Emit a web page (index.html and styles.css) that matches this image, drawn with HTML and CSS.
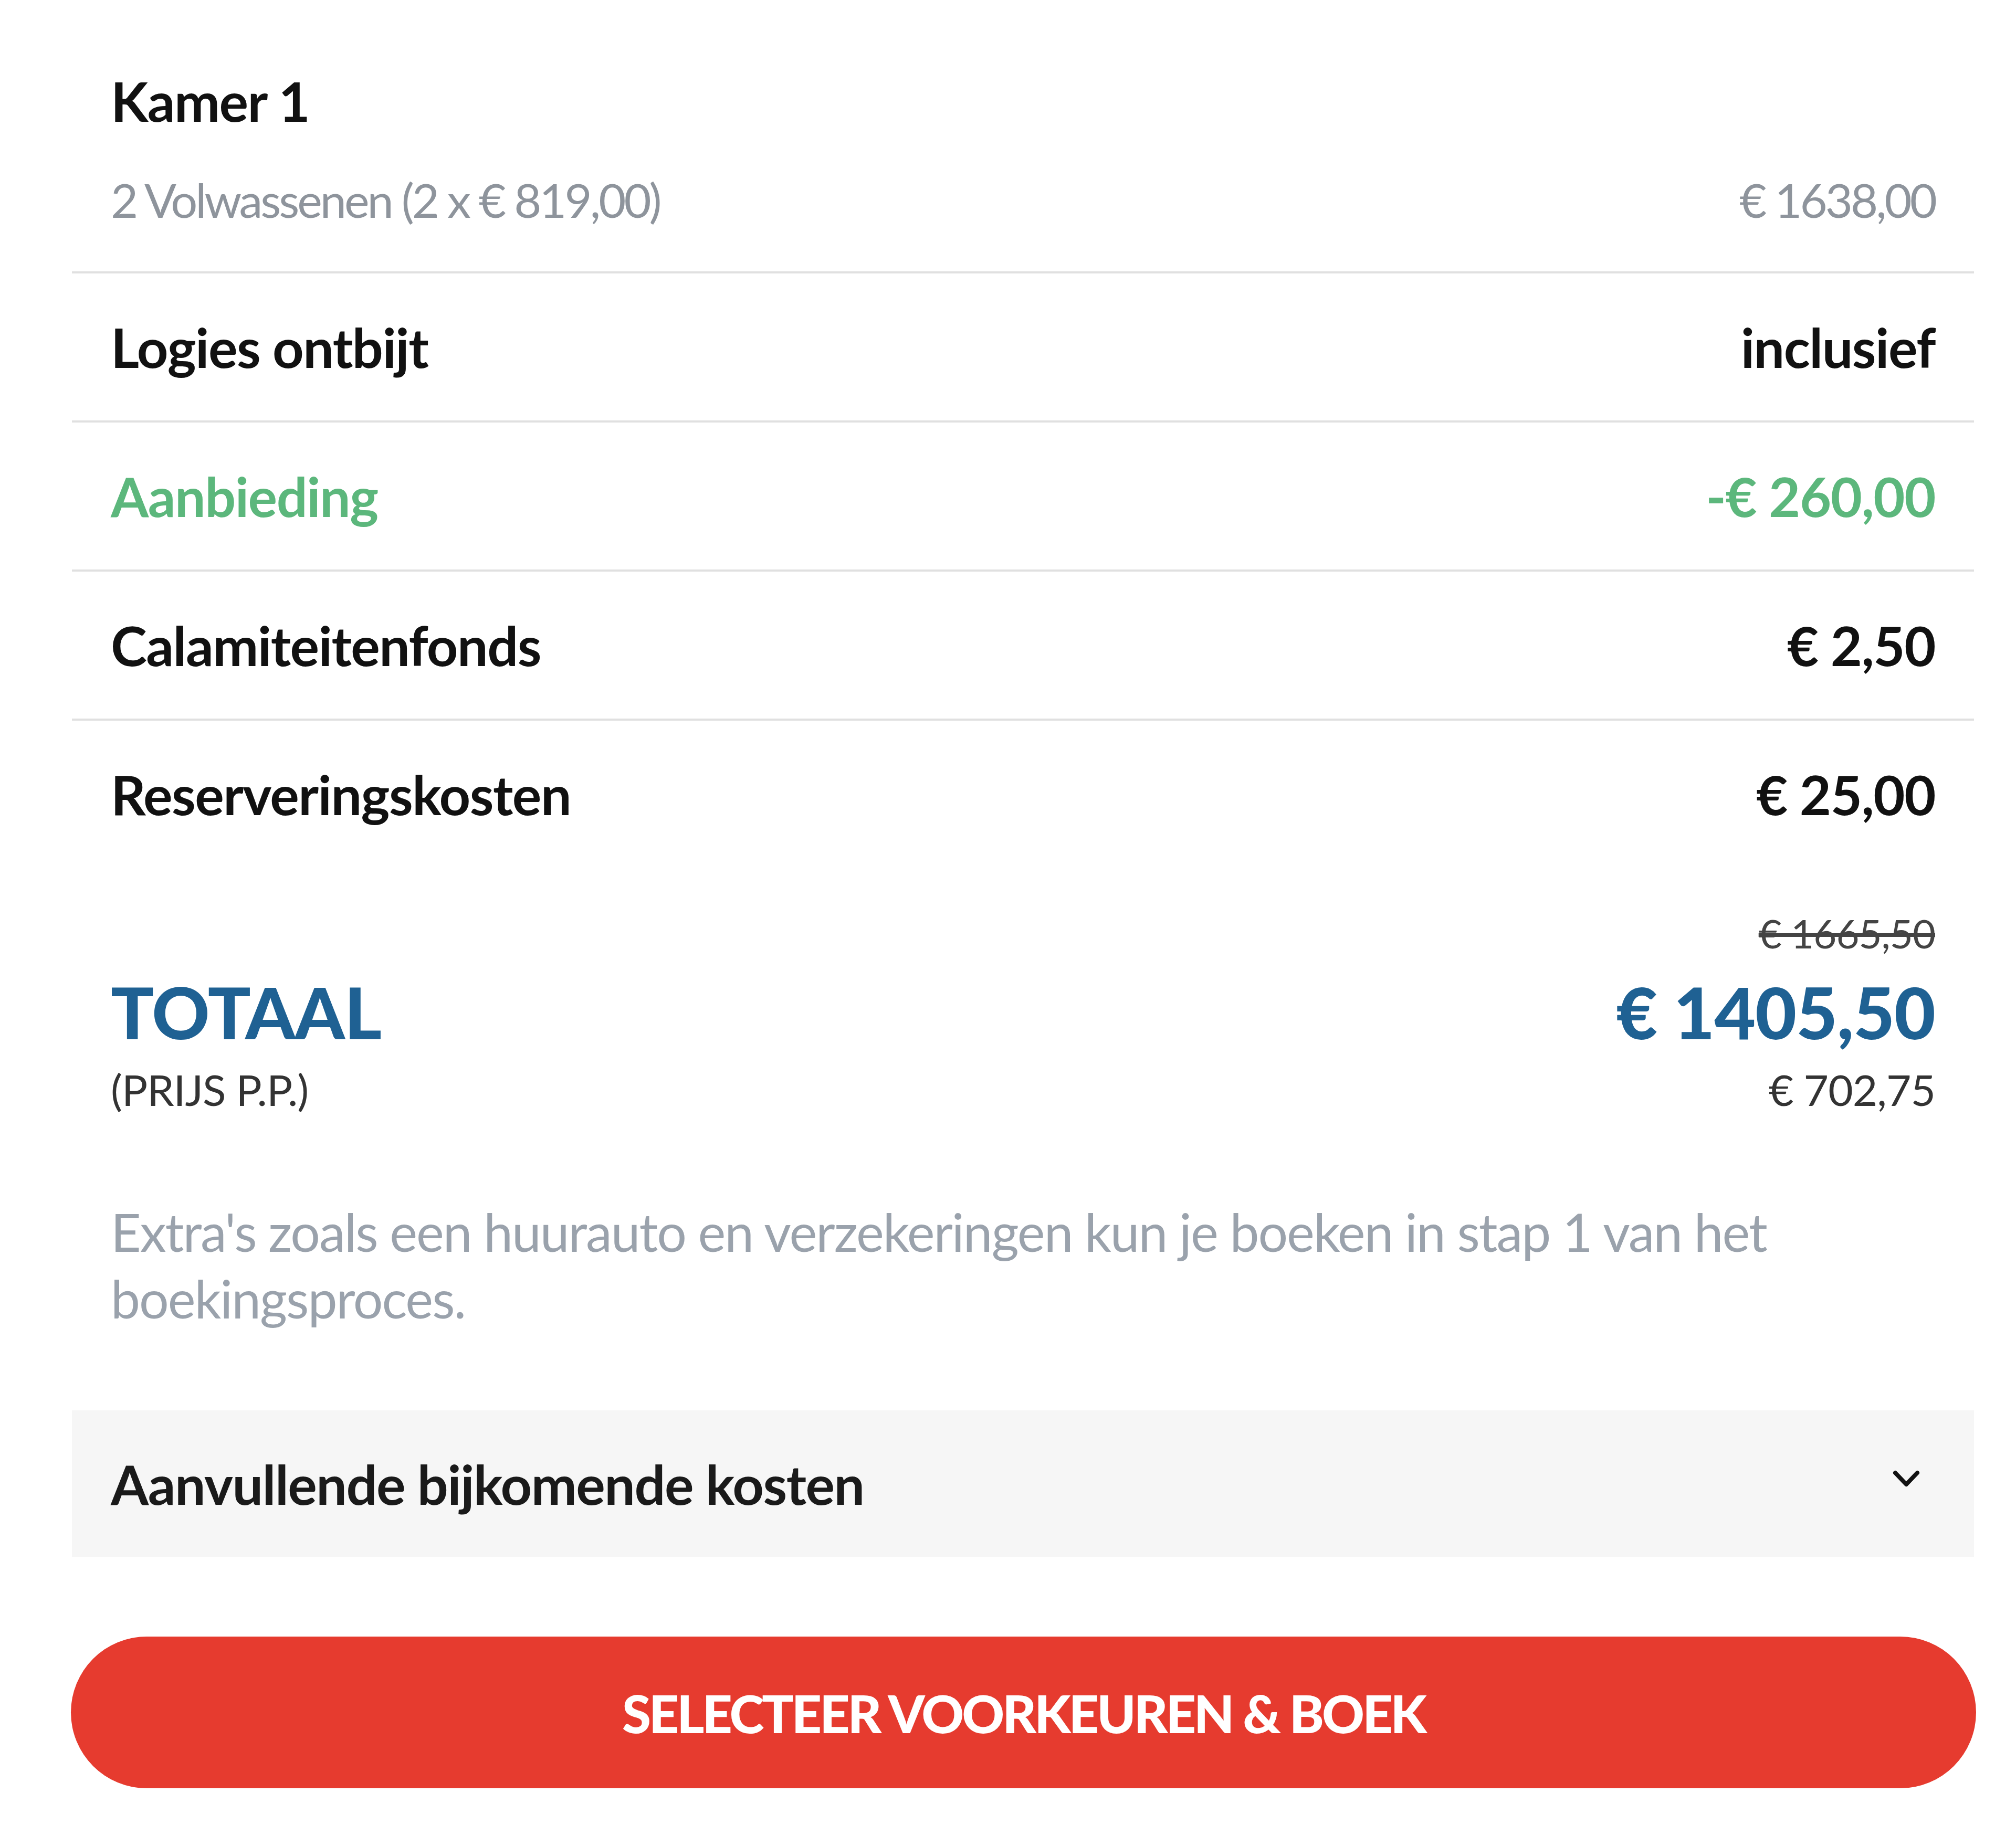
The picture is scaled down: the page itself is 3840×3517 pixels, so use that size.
FILE: index.html
```html
<!DOCTYPE html>
<html lang="nl">
<head>
<meta charset="utf-8">
<title>Prijsoverzicht</title>
<link rel="stylesheet" href="styles.css">
</head>
<body>
<div class="summary">
  <section class="row room">
    <div class="room-title">Kamer 1</div>
    <div class="line sub"><span>2 Volwassenen (2 x € 819,00)</span><span>€ 1638,00</span></div>
  </section>
  <div class="row line strong"><span>Logies ontbijt</span><span>inclusief</span></div>
  <div class="row line strong offer"><span>Aanbieding</span><span>-€ 260,00</span></div>
  <div class="row line strong"><span>Calamiteitenfonds</span><span>€ 2,50</span></div>
  <div class="row line strong last"><span>Reserveringskosten</span><span>€ 25,00</span></div>

  <section class="total">
    <div class="old-price"><s>€ 1665,50</s></div>
    <div class="line total-main"><span>TOTAAL</span><span>€ 1405,50</span></div>
    <div class="line total-pp"><span>(PRIJS P.P.)</span><span>€ 702,75</span></div>
  </section>

  <p class="note">Extra's zoals een huurauto en verzekeringen kun je boeken in stap 1 van het boekingsproces.</p>

  <div class="extra">
    <span>Aanvullende bijkomende kosten</span>
    <svg class="chev" width="52" height="34" viewBox="0 0 52 34"><polyline points="5,6 26,28 47,6" fill="none" stroke="#111" stroke-width="8" stroke-linecap="round" stroke-linejoin="round"/></svg>
  </div>

  <button class="book">SELECTEER VOORKEUREN &amp; BOEK</button>
</div>
</body>
</html>
```

FILE: styles.css
```css
html, body {
  margin: 0;
  padding: 0;
  background: #ffffff;
}
body {
  font-family: Lato, "Open Sans", "Liberation Sans", sans-serif;
  color: #111;
  height: 3517px;
}
.summary {
  margin-left: 137px;
  width: 3623px;
}
.row {
  padding: 80px 74px;
  border-bottom: 4px solid #e0e0e0;
}
.row.last {
  border-bottom: none;
}
.room {
  padding-top: 132px;
  padding-bottom: 77px;
}
.room-title {
  font-size: 104px;
  font-weight: 700;
  line-height: 120px;
  letter-spacing: -1.5px;
  margin-bottom: 68px;
}
.line {
  display: flex;
  justify-content: space-between;
  align-items: center;
}
.sub {
  font-size: 90px;
  line-height: 120px;
  letter-spacing: -4px;
  color: #8e949c;
}
.strong {
  font-size: 104px;
  font-weight: 700;
  line-height: 120px;
  letter-spacing: -1.5px;
}
.offer {
  color: #5cb77c;
}
.total {
  padding: 80px 74px 0;
}
.old-price {
  text-align: right;
  font-size: 76px;
  line-height: 90px;
  letter-spacing: -1px;
  color: #444;
}
.total-main {
  margin-top: 25px;
  font-size: 136px;
  font-weight: 900;
  line-height: 160px;
  letter-spacing: -1px;
  color: #1f6193;
}
.total-pp {
  margin-top: 17px;
  font-size: 82px;
  line-height: 100px;
  letter-spacing: -1px;
  color: #333;
}
.note {
  margin: 158px 0 0;
  padding: 0 74px;
  font-size: 100px;
  line-height: 127px;
  letter-spacing: -2px;
  color: #9aa2ac;
}
.extra {
  margin-top: 150px;
  height: 279px;
  background: #f6f6f6;
  display: flex;
  align-items: center;
  justify-content: space-between;
  padding: 0 103px 0 74px;
  font-size: 104px;
  font-weight: 700;
  letter-spacing: -1.5px;
  color: #1a1a1a;
}
.chev {
  display: block;
  margin-top: -20px;
}
.book {
  display: block;
  margin: 152px 0 0 -2px;
  width: 3629px;
  height: 289px;
  border: none;
  border-radius: 145px;
  background: #e63b2f;
  color: #fff;
  font-family: Lato, "Open Sans", "Liberation Sans", sans-serif;
  font-size: 100px;
  font-weight: 900;
  letter-spacing: -4px;
  cursor: pointer;
}
```
